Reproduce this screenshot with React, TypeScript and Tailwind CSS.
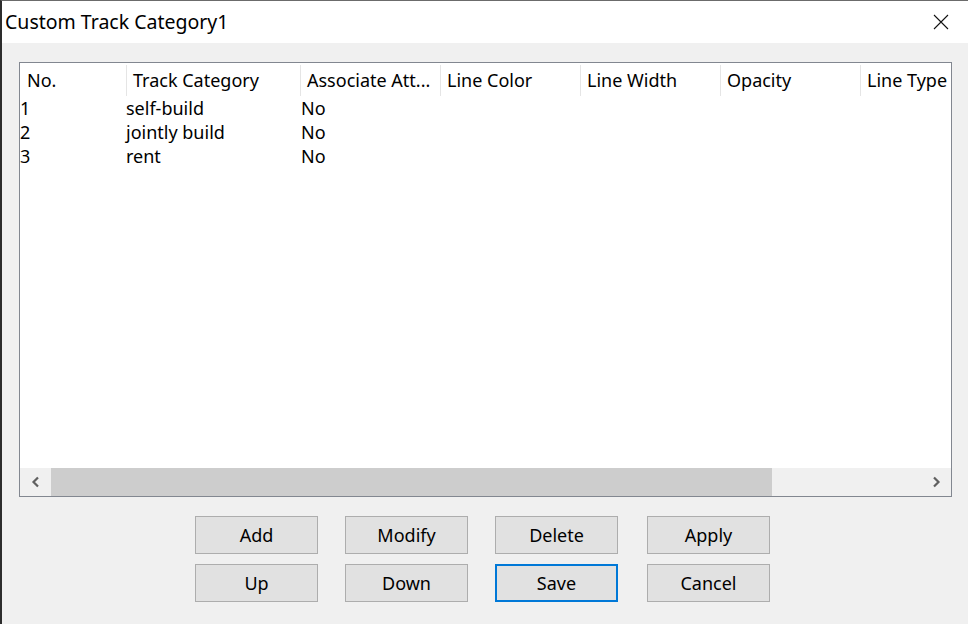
import React from 'react';

const columns = [
  { label: 'No.', width: 106 },
  { label: 'Track Category', width: 174 },
  { label: 'Associate Att...', width: 140 },
  { label: 'Line Color', width: 140 },
  { label: 'Line Width', width: 140 },
  { label: 'Opacity', width: 140 },
  { label: 'Line Type', width: 140 },
];

const rows = [
  ['1', 'self-build', 'No'],
  ['2', 'jointly build', 'No'],
  ['3', 'rent', 'No'],
];

const buttons = [
  ['Add', 'Modify', 'Delete', 'Apply'],
  ['Up', 'Down', 'Save', 'Cancel'],
];

function Chevron({ dir }: { dir: 'left' | 'right' }) {
  return (
    <svg width="10" height="12" viewBox="0 0 10 12">
      <polyline
        points={dir === 'left' ? '7,1.5 2.5,6 7,10.5' : '3,1.5 7.5,6 3,10.5'}
        fill="none"
        stroke="#606060"
        strokeWidth="2.2"
      />
    </svg>
  );
}

export default function App() {
  return (
    <div
      className="w-[968px] h-[624px] bg-[#f0f0f0] flex flex-col border-l-2 border-l-[#2d2d2d] border-t border-t-[#6b6b6b] overflow-hidden text-black"
      style={{ fontFamily: '"Noto Sans", "Open Sans", sans-serif' }}
    >
      {/* title bar */}
      <div className="h-[42px] bg-white flex items-center justify-between shrink-0">
        <span className="pl-[3px] text-[19.5px] leading-none pb-[1px]">Custom Track Category1</span>
        <svg width="16" height="16" viewBox="0 0 16 16" className="mr-[19px]">
          <path d="M1 1 L15 15 M15 1 L1 15" stroke="#111" strokeWidth="1.1" />
        </svg>
      </div>

      {/* list view */}
      <div className="ml-[17px] mt-[19px] w-[933px] h-[435px] border border-[#828790] bg-white flex flex-col shrink-0">
        <div className="flex-1 overflow-hidden">
          <div className="flex h-[33px] items-center">
            {columns.map((c, i) => (
              <div
                key={c.label}
                className={`h-[31px] mt-[2px] flex items-center shrink-0 whitespace-nowrap text-[18px] ${i === 0 ? 'pl-[7px]' : 'pl-[6px] border-l border-[#e5e5e5]'}`}
                style={{ width: c.width }}
              >
                {c.label}
              </div>
            ))}
          </div>
          {rows.map((r) => (
            <div key={r[0]} className="flex h-[24px] items-center text-[18px]">
              {r.map((cell, i) => (
                <div
                  key={i}
                  className={`shrink-0 whitespace-nowrap ${i === 2 ? 'pl-[1px]' : 'pl-0'}`}
                  style={{ width: columns[i].width }}
                >
                  {cell}
                </div>
              ))}
            </div>
          ))}
        </div>

        {/* horizontal scrollbar */}
        <div className="h-[28px] bg-[#f0f0f0] flex items-center shrink-0">
          <div className="w-[31px] h-full flex items-center justify-center">
            <Chevron dir="left" />
          </div>
          <div className="w-[721px] h-full bg-[#cdcdcd]" />
          <div className="flex-1" />
          <div className="w-[31px] h-full flex items-center justify-center">
            <Chevron dir="right" />
          </div>
        </div>
      </div>

      {/* button grid */}
      <div className="mt-[19px] ml-[193px] flex flex-col gap-[10px]">
        {buttons.map((row, ri) => (
          <div key={ri} className="flex gap-[27px]">
            {row.map((label, ci) => (
              <div
                key={label}
                className={`w-[123px] h-[38px] bg-[#e1e1e1] flex items-center justify-center text-[18px] ${label === 'Save' ? 'border-2 border-[#0078d7]' : 'border border-[#adadad]'} ${ci === 3 ? 'ml-[2px]' : ''}`}
              >
                {label}
              </div>
            ))}
          </div>
        ))}
      </div>
    </div>
  );
}
